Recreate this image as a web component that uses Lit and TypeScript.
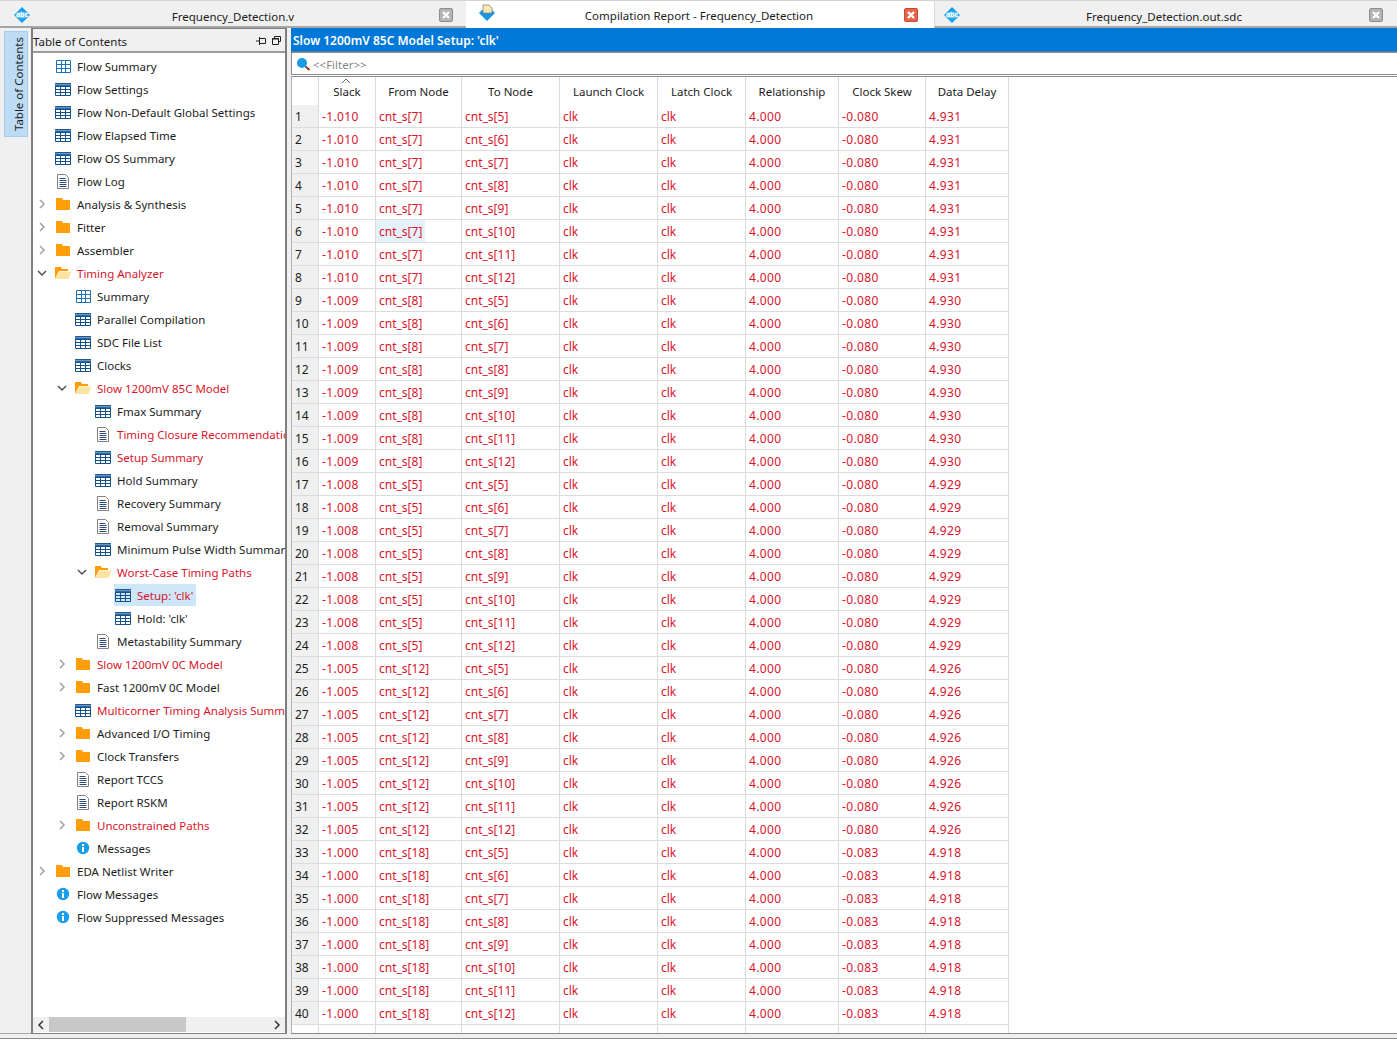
import { LitElement, html, css, svg } from "lit";
import { customElement } from "lit/decorators.js";

type Ic = "t1" | "t2" | "doc" | "folder" | "open" | "info";
interface N { d: number; t: string; i: Ic; c?: "r" | "d"; red?: boolean; sel?: boolean }

const tree: N[] = [
  { d: 0, t: "Flow Summary", i: "t1" },
  { d: 0, t: "Flow Settings", i: "t2" },
  { d: 0, t: "Flow Non-Default Global Settings", i: "t2" },
  { d: 0, t: "Flow Elapsed Time", i: "t2" },
  { d: 0, t: "Flow OS Summary", i: "t2" },
  { d: 0, t: "Flow Log", i: "doc" },
  { d: 0, t: "Analysis & Synthesis", i: "folder", c: "r" },
  { d: 0, t: "Fitter", i: "folder", c: "r" },
  { d: 0, t: "Assembler", i: "folder", c: "r" },
  { d: 0, t: "Timing Analyzer", i: "open", c: "d", red: true },
  { d: 1, t: "Summary", i: "t1" },
  { d: 1, t: "Parallel Compilation", i: "t2" },
  { d: 1, t: "SDC File List", i: "t2" },
  { d: 1, t: "Clocks", i: "t2" },
  { d: 1, t: "Slow 1200mV 85C Model", i: "open", c: "d", red: true },
  { d: 2, t: "Fmax Summary", i: "t2" },
  { d: 2, t: "Timing Closure Recommendations", i: "doc", red: true },
  { d: 2, t: "Setup Summary", i: "t2", red: true },
  { d: 2, t: "Hold Summary", i: "t2" },
  { d: 2, t: "Recovery Summary", i: "doc" },
  { d: 2, t: "Removal Summary", i: "doc" },
  { d: 2, t: "Minimum Pulse Width Summary", i: "t2" },
  { d: 2, t: "Worst-Case Timing Paths", i: "open", c: "d", red: true },
  { d: 3, t: "Setup: 'clk'", i: "t2", red: true, sel: true },
  { d: 3, t: "Hold: 'clk'", i: "t2" },
  { d: 2, t: "Metastability Summary", i: "doc" },
  { d: 1, t: "Slow 1200mV 0C Model", i: "folder", c: "r", red: true },
  { d: 1, t: "Fast 1200mV 0C Model", i: "folder", c: "r" },
  { d: 1, t: "Multicorner Timing Analysis Summary", i: "t2", red: true },
  { d: 1, t: "Advanced I/O Timing", i: "folder", c: "r" },
  { d: 1, t: "Clock Transfers", i: "folder", c: "r" },
  { d: 1, t: "Report TCCS", i: "doc" },
  { d: 1, t: "Report RSKM", i: "doc" },
  { d: 1, t: "Unconstrained Paths", i: "folder", c: "r", red: true },
  { d: 1, t: "Messages", i: "info" },
  { d: 0, t: "EDA Netlist Writer", i: "folder", c: "r" },
  { d: 0, t: "Flow Messages", i: "info" },
  { d: 0, t: "Flow Suppressed Messages", i: "info" },
];

const groups = [
  ["-1.010", "cnt_s[7]", "-0.080", "4.931"],
  ["-1.009", "cnt_s[8]", "-0.080", "4.930"],
  ["-1.008", "cnt_s[5]", "-0.080", "4.929"],
  ["-1.005", "cnt_s[12]", "-0.080", "4.926"],
  ["-1.000", "cnt_s[18]", "-0.083", "4.918"],
];
const cols = ["Slack", "From Node", "To Node", "Launch Clock", "Latch Clock", "Relationship", "Clock Skew", "Data Delay"];
const numeric = new Set([0, 5, 6, 7]);

const icon = (k: Ic) => {
  switch (k) {
    case "t1":
      return svg`<svg width="18" height="15" viewBox="0 0 18 15"><path d="M2.500 1.500h14v12h-14zM2.500 5.500h14M2.500 9.500h14M7.500 1.500v12M11.500 1.500v12" fill="none" stroke="#1f70b4"/></svg>`;
    case "t2":
      return svg`<svg width="18" height="15" viewBox="0 0 18 15"><path d="M1 1h16v4H1z" fill="#1c5a94"/><rect x="1" y="2.200" width="16" height="1" fill="#7fa6c8"/><path d="M1.500 4.500h15v9h-15zM1.500 7.500h15M1.500 10.500h15M6.500 4.500v9M11.500 4.500v9" fill="none" stroke="#14508a"/></svg>`;
    case "doc":
      return svg`<svg width="18" height="17" viewBox="0 0 18 17"><path d="M3.500 1.500h8l3 3v11h-11z" fill="#fff" stroke="#8b7f78"/><path d="M5.500 5.500h6M5.500 7.500h7M5.500 9.500h7M5.500 11.500h7M5.500 13.500h7" stroke="#2a4a78"/></svg>`;
    case "folder":
      return svg`<svg width="18" height="14" viewBox="0 0 18 14"><path d="M2 1h6l1 2h7v10H2z" fill="#ff9d0b"/></svg>`;
    case "open":
      return svg`<svg width="18" height="14" viewBox="0 0 18 14"><path d="M1 13V1h6l1 2h6v2H5z" fill="#ff9d0b"/><path d="M1.500 13 5 5.500h12.500L14.500 13z" fill="#ffe3a0"/></svg>`;
    case "info":
      return svg`<svg width="18" height="15" viewBox="0 0 18 15"><circle cx="9" cy="7" r="6.200" fill="#1b9ee9"/><rect x="8" y="6" width="2" height="5" fill="#fff"/><rect x="8" y="3" width="2" height="2" fill="#fff"/></svg>`;
  }
};

const abc = svg`<svg width="18" height="18" viewBox="0 0 18 18"><path d="M9 1l8 8-8 8-8-8z" fill="#12a0ea"/><ellipse cx="9" cy="9" rx="6.500" ry="3.600" fill="#6fc6f3"/><text x="9" y="11.400" text-anchor="middle" font-size="7" font-weight="700" font-family="Noto Sans, sans-serif" fill="#fff">abc</text></svg>`;
const report = svg`<svg width="18" height="18" viewBox="0 0 18 18"><path d="M1 9l8 8 8-8-3-3H4z" fill="#1696e6"/><path d="M5 1h6l3 3v5H5z" fill="#fbe9b8" stroke="#8a8070" stroke-width=".8"/></svg>`;
const closeIc = svg`<svg width="14" height="14" viewBox="0 0 14 14"><path d="M4 4l6 6M10 4l-6 6" stroke="#fff" stroke-width="2.400"/></svg>`;

@customElement("app-root")
export class AppRoot extends LitElement {
  static styles = css`
    :host { display: block; width: 1397px; height: 1039px; font: 11.5px "Noto Sans", sans-serif; color: #1c1c1c; background: #f0f0f0; overflow: hidden; }
    .tabs { display: flex; height: 28px; box-sizing: border-box; border-top: 1px solid #d4d4d4; }
    .tab { flex: 0 0 auto; position: relative; display: flex; align-items: center; justify-content: center; box-sizing: border-box; border-bottom: 2px solid #a6a6a6; background: #f0f0f0; padding-top: 5px; }
    .tab.a { background: #fff; border-bottom-color: #fff; padding: 3px 2px 0 0; }
    .t1 { width: 466px; }
    .t2 { width: 468px; }
    .t3 { width: 463px; border-left: 1px solid #d8d8d8; padding-right: 4px; }
    .ti { position: absolute; left: 13px; top: 5px; line-height: 0; }
    .a .ti { left: 12px; top: 3px; }
    .t3 .ti { left: 8px; top: 5px; }
    .x { position: absolute; top: 7px; right: 13px; width: 14px; height: 14px; box-sizing: border-box; background: #b4b4b4; border: 1px solid #8e8e8e; border-radius: 2px; line-height: 0; }
    .x svg { margin: -1px; }
    .a .x { background: #e8634a; border-color: #c9492f; right: 16px; }
    .t3 .x { right: 14px; }
    .main { display: flex; height: 1006px; }
    .side { width: 31px; flex: none; box-sizing: border-box; padding: 3px 0 0 4px; border-bottom: 1px solid #a8a8a8; }
    .vt { width: 24px; height: 106px; box-sizing: border-box; background: #bcdcf5; border: 1px solid #a5cdea; display: flex; align-items: center; justify-content: center; padding-left: 5px; }
    .vt span { writing-mode: vertical-rl; transform: rotate(180deg); white-space: nowrap; }
    .panel { width: 256px; box-sizing: border-box; flex: none; border: solid #7f7f7f; border-width: 1px 2px 1px 2px; display: flex; flex-direction: column; background: #fff; }
    .ph { height: 24px; flex: none; box-sizing: border-box; display: flex; align-items: center; padding: 2px 4px 0 0; background: #f0f0f0; border-bottom: 2px solid #9a9a9a; }
    .ph b { font-weight: 400; flex: 1; }
    .ph svg { margin-left: 5px; }
    .tree { flex: 1; padding-top: 2px; overflow: hidden; }
    .row { display: flex; align-items: flex-start; height: 23px; white-space: nowrap; }
    .chev { width: 12px; height: 12px; flex: none; margin: 5px 6px 0 0; line-height: 0; }
    .lab { display: flex; align-items: center; height: 22px; padding-right: 3px; }
    .lab.sel { background: #cde6f8; }
    .ic { width: 18px; flex: none; margin-right: 5px; line-height: 0; display: flex; justify-content: flex-start; }
    .red { color: #d9142c; }
    .hs { height: 15px; flex: none; margin-bottom: 1px; background: #f0f0f0; display: flex; align-items: center; justify-content: space-between; padding: 0 4px; }
    .thumb { width: 137px; height: 15px; background: #c8c8c8; margin-left: 4px; margin-right: auto; }
    .right { flex: 1; min-width: 0; margin-left: 4px; display: flex; flex-direction: column; background: #fff; border-bottom: 1px solid #8a8a8a; }
    .title { height: 24px; flex: none; box-sizing: border-box; background: #0078d7; color: #fff; font-weight: 600; font-size: 12px; padding: 2px 0 0 2px; display: flex; align-items: center; border-bottom: 1px solid #4f7fa6; }
    .filter { height: 23px; flex: none; box-sizing: border-box; border: 1px solid #8c8c8c; border-right: none; margin: 0 0 1px 0; display: flex; align-items: center; padding: 1px 0 0 4px; color: #888; background: #fff; }
    .filter svg { margin-right: 1px; }
    .tbl { flex: 1; border-top: 1px solid #8c8c8c; border-left: 1px solid #b4b4b4; display: grid; grid-template-columns: 27px 57px 86px 98px 98px 88px 93px 87px 83px; grid-auto-rows: 23px; grid-template-rows: 28px; justify-content: start; overflow: hidden; min-height: 0; }
    .c { box-sizing: border-box; border-right: 1px solid #dcdcdc; border-bottom: 1px solid #dcdcdc; padding: 1px 0 0 3px; display: flex; align-items: center; white-space: nowrap; color: #d9142c; font-size: 12px; }
    .num { letter-spacing: .35px; }
    .h { color: #1c1c1c; font-size: 11.5px; justify-content: center; border-bottom: none; padding: 1px 0 0; position: relative; }
    .h svg { position: absolute; left: 22px; top: 1px; }
    .n { color: #1c1c1c; background: #f0f0f0; }
    .corner { background: #fff; }
    .hl { align-self: stretch; display: flex; align-items: center; background: #e5f1fb; margin: -1px 0 0 -3px; padding: 0 3px; }
    .foot { height: 5px; box-sizing: border-box; border-bottom: 1px solid #8a8a8a; }
  `;

  private chev(c?: "r" | "d") {
    if (!c) return html`<span class="chev"></span>`;
    return html`<span class="chev"><svg width="12" height="12" viewBox="0 0 12 12">${c === "r"
      ? svg`<path d="M4 2l4 4-4 4" fill="none" stroke="#a0a0a0" stroke-width="1.500"/>`
      : svg`<path d="M2 4l4 4 4-4" fill="none" stroke="#505050" stroke-width="1.500"/>`}</svg></span>`;
  }

  render() {
    const rows: unknown[] = [];
    for (let i = 0; i < 40; i++) {
      const g = groups[Math.floor(i / 8)];
      const to = `cnt_s[${5 + (i % 8)}]`;
      const vals = [g[0], g[1], to, "clk", "clk", "4.000", g[2], g[3]];
      rows.push(html`<div class="c n">${i + 1}</div>`);
      vals.forEach((v, k) => {
        rows.push(html`<div class="c ${numeric.has(k) ? "num" : ""}">${i === 5 && k === 1 ? html`<span class="hl">${v}</span>` : v}</div>`);
      });
    }
    return html`
      <div class="tabs">
        <div class="tab t1"><span class="ti">${abc}</span>Frequency_Detection.v<span class="x">${closeIc}</span></div>
        <div class="tab t2 a"><span class="ti">${report}</span>Compilation Report - Frequency_Detection<span class="x">${closeIc}</span></div>
        <div class="tab t3"><span class="ti">${abc}</span>Frequency_Detection.out.sdc<span class="x">${closeIc}</span></div>
      </div>
      <div class="main">
        <div class="side"><div class="vt"><span>Table of Contents</span></div></div>
        <div class="panel">
          <div class="ph"><b>Table of Contents</b>
            <svg width="11" height="10" viewBox="0 0 11 10"><path d="M0 5h4M3.500 2.500h6v5h-6zM3.500 1v8" fill="none" stroke="#222"/></svg>
            <svg width="9" height="10" viewBox="0 0 9 10"><path d="M2.500 2.500V.5h6v5h-2M.5 2.500h6v6h-6z" fill="none" stroke="#222"/><path d="M0 3h7" stroke="#222"/></svg>
          </div>
          <div class="tree">
            ${tree.map(n => html`<div class="row ${n.red ? "red" : ""}" style="padding-left:${3 + 20 * n.d}px">
              ${this.chev(n.c)}
              <div class="lab ${n.sel ? "sel" : ""}"><span class="ic">${icon(n.i)}</span><span>${n.t}</span></div>
            </div>`)}
          </div>
          <div class="hs">
            <svg width="8" height="10" viewBox="0 0 8 10"><path d="M6 1L2 5l4 4" fill="none" stroke="#333" stroke-width="1.500"/></svg>
            <div class="thumb"></div>
            <svg width="8" height="10" viewBox="0 0 8 10"><path d="M2 1l4 4-4 4" fill="none" stroke="#333" stroke-width="1.500"/></svg>
          </div>
        </div>
        <div class="right">
          <div class="title">Slow 1200mV 85C Model Setup: 'clk'</div>
          <div class="filter">
            <svg width="16" height="14" viewBox="0 0 16 14"><circle cx="6" cy="6" r="5" fill="#1a9be8"/><path d="M9.500 9.500l4 3.500" stroke="#8a3a2a" stroke-width="2"/></svg>&lt;&lt;Filter&gt;&gt;
          </div>
          <div class="tbl">
            <div class="c h corner"></div>
            ${cols.map((c, i) => html`<div class="c h">${i === 0 ? svg`<svg width="10" height="6" viewBox="0 0 10 6"><path d="M1 5l4-4 4 4" fill="none" stroke="#666"/></svg>` : ""}${c}</div>`)}
            ${rows}
            ${Array.from({ length: 9 }, () => html`<div class="c blank"></div>`)}
          </div>
        </div>
      </div>
      <div class="foot"></div>
    `;
  }
}
